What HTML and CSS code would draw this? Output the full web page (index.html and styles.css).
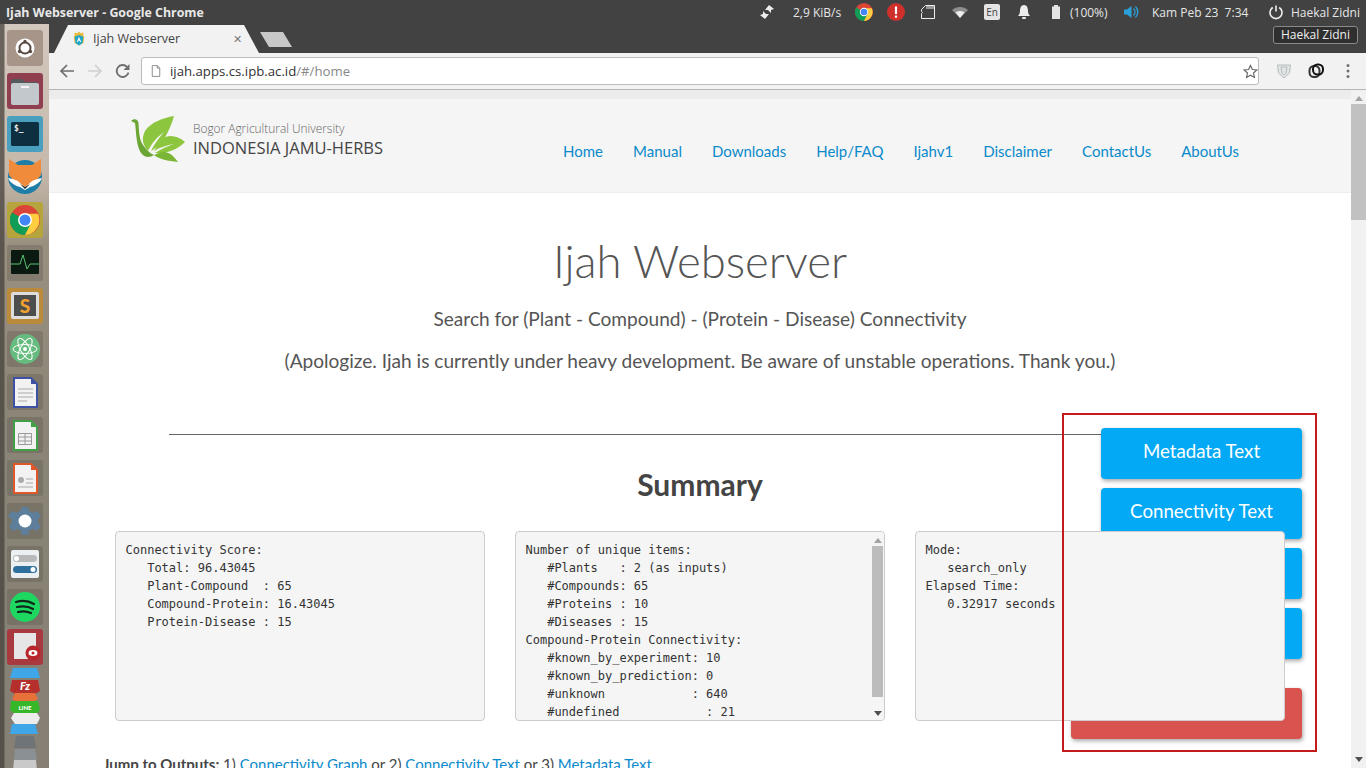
FILE: index.html
```html
<!DOCTYPE html>
<html lang="en">
<head>
  <meta charset="UTF-8" />
  <meta name="viewport" content="width=device-width, initial-scale=1.0" />
  <title>Ijah Webserver</title>
  <link rel="stylesheet" href="styles.css">
</head>
<body>
  <svg class="defs" width="0" height="0">
    <symbol id="chrome" viewBox="0 0 24 24">
      <circle cx="12" cy="12" r="12" fill="#db4437"/>
      <path d="M12 12 L1.6 6 A12 12 0 0 0 12 24 L18 14Z" fill="#0f9d58"/>
      <path d="M12 7 H22.4 A12 12 0 0 1 12 24 L17 14Z" fill="#ffcd40"/>
      <circle cx="12" cy="12" r="5.6" fill="#fff"/>
      <circle cx="12" cy="12" r="4.4" fill="#4285f4"/>
    </symbol>
  </svg>

  <header class="panel">
    <div class="panel-title">Ijah Webserver - Google Chrome</div>
    <div class="tray">
      <svg class="tray-icon" viewBox="0 0 16 16"><path d="M10 1l5 4-3 1v3L9 6 6 6zM6 15l-5-4 3-1V7l3 3 3 0z" fill="#eee"/></svg>
      <span class="tray-text net">2,9 KiB/s</span>
      <svg class="tray-icon tray-icon-big" viewBox="0 0 24 24"><use href="#chrome"/></svg>
      <svg class="tray-icon tray-icon-big" viewBox="0 0 20 20"><circle cx="10" cy="10" r="10" fill="#d0302c"/><rect x="8.8" y="3.5" width="2.4" height="9" rx="1" fill="#fff"/><rect x="8.8" y="14" width="2.4" height="2.4" fill="#fff"/></svg>
      <svg class="tray-icon" viewBox="0 0 16 16"><path d="M5.500 1.500H14.500V14.500H1.500V9.500L2.500 8.500 1.500 7.500V5.500Z" fill="none" stroke="#eee"/><path d="M7 2v3M9 2v3M11 2v3M13 2v3" stroke="#eee"/></svg>
      <svg class="tray-icon" viewBox="0 0 16 16"><path d="M0 6C4 2 12 2 16 6L8 14Z" fill="#8e8e8e"/><path d="M3.500 8.500C6 6.500 10 6.500 12.500 8.500L8 14Z" fill="#eee"/></svg>
      <span class="lang">En</span>
      <svg class="tray-icon" viewBox="0 0 16 16"><path d="M8 1C5 1 4 4 4 7c0 2-1 4-2 5h12c-1-1-2-3-2-5 0-3-1-6-4-6z" fill="#eee"/><rect x="6" y="13" width="4" height="2" rx="1" fill="#eee"/></svg>
      <svg class="tray-icon" viewBox="0 0 16 16"><path d="M6 1h4v1.500h2V15H4V2.500h2z" fill="#e4e4e4"/></svg>
      <span class="tray-text batt">(100%)</span>
      <svg class="tray-icon spk" viewBox="0 0 16 16"><path d="M1 5.500h3L8.500 2v12L4 10.500H1z" fill="#2a9fd8"/><path d="M10.500 4.500c2 2 2 5 0 7M12.500 2.500c3 3 3 8 0 11" fill="none" stroke="#2a9fd8" stroke-width="1.400"/></svg>
      <span class="tray-text date">Kam Peb 23&nbsp; 7:34</span>
      <svg class="tray-icon pwr" viewBox="0 0 16 16"><path d="M8 1.500v6" stroke="#eee" stroke-width="1.600"/><path d="M4.800 3.500a6 6 0 1 0 6.400 0" fill="none" stroke="#eee" stroke-width="1.600"/></svg>
      <span class="tray-text user">Haekal Zidni</span>
    </div>
    <div class="user-tip">Haekal Zidni</div>
  </header>

  <div class="desktop">
    <nav class="launcher">
      <div class="tile tile-ubuntu">
        <svg viewBox="0 0 36 36"><circle cx="18" cy="18" r="9.500" fill="#fff"/><circle cx="18" cy="18" r="5.500" fill="none" stroke="#5a4a44" stroke-width="2"/><circle cx="18" cy="11.500" r="1.700" fill="#5a4a44"/><circle cx="12.500" cy="21.500" r="1.700" fill="#5a4a44"/><circle cx="23.500" cy="21.500" r="1.700" fill="#5a4a44"/></svg>
      </div>
      <div class="tile tile-files">
        <svg viewBox="0 0 36 36"><path d="M4 8a2 2 0 0 1 2-2h9l3 3h12v4H4z" fill="#55595c"/><rect x="4" y="10" width="28" height="22" rx="2" fill="#c3c8cc"/><rect x="14" y="13" width="8" height="2" fill="#f4f4f4"/></svg>
      </div>
      <div class="tile tile-term">
        <svg viewBox="0 0 36 36"><rect x="4" y="6" width="28" height="24" rx="1.500" fill="#0d2f40"/><text x="7" y="15" class="term-text">$_</text></svg>
      </div>
      <div class="tile tile-plain">
        <svg viewBox="0 0 36 36"><circle cx="18" cy="18" r="17" fill="#1f7ea8"/><path d="M2 0l9 6h14l9-6v16l-7 8-9 6-9-6-7-8z" fill="#ef8b3a"/><path d="M1 19c5 1 10 2 13 6l4 3 4-3c3-4 8-5 13-6-2 5-8 8-12 9l-5 3-5-3C9 27 3 24 1 19z" fill="#fff"/><path d="M13 25l5 3 5-3-5 5z" fill="#1c2a33"/></svg>
      </div>
      <div class="tile tile-gold">
        <svg viewBox="0 0 24 24" class="icon-wide"><use href="#chrome"/></svg>
      </div>
      <div class="tile tile-dim">
        <svg viewBox="0 0 36 36"><rect x="4" y="5" width="28" height="24" rx="1" fill="#0b1a10"/><path d="M4 19h9l3-9 4 14 3-5h9" fill="none" stroke="#57c274" stroke-width="1"/></svg>
      </div>
      <div class="tile tile-sublime">
        <svg viewBox="0 0 36 36"><rect x="4" y="4" width="28" height="27" rx="2" fill="#dcdcdc"/><rect x="7" y="7" width="22" height="21" fill="#4d4d4d"/><text x="18" y="25" class="sublime-text">S</text></svg>
      </div>
      <div class="tile tile-dim">
        <svg viewBox="0 0 36 36"><circle cx="18" cy="18" r="15" fill="#66bb7f"/><g fill="none" stroke="#fff" stroke-width="1"><ellipse cx="18" cy="18" rx="12" ry="4.500"/><ellipse cx="18" cy="18" rx="12" ry="4.500" transform="rotate(60 18 18)"/><ellipse cx="18" cy="18" rx="12" ry="4.500" transform="rotate(120 18 18)"/></g><circle cx="18" cy="18" r="2" fill="#fff"/></svg>
      </div>
      <div class="tile tile-dim">
        <svg viewBox="0 0 36 36"><path d="M7 4h17l6 6v23H7z" fill="#f2f2f2" stroke="#3f51a5" stroke-width="2"/><path d="M24 4l6 6h-6z" fill="#3f51a5"/><path d="M11 15h15M11 19h15M11 23h15M11 27h9" stroke="#aaa"/></svg>
      </div>
      <div class="tile tile-dim">
        <svg viewBox="0 0 36 36"><path d="M7 4h17l6 6v23H7z" fill="#f2f2f2" stroke="#43a047" stroke-width="2"/><path d="M24 4l6 6h-6z" fill="#43a047"/><path d="M11.500 16.500h13v11h-13zM11.500 20h13M11.500 24h13M18 16.500v11" fill="none" stroke="#999"/></svg>
      </div>
      <div class="tile tile-dim">
        <svg viewBox="0 0 36 36"><path d="M7 4h17l6 6v23H7z" fill="#f2f2f2" stroke="#e0572a" stroke-width="2"/><path d="M24 4l6 6h-6z" fill="#e0572a"/><circle cx="14" cy="20" r="3" fill="#aaa"/><path d="M19 19h7M19 23h7M11 27h15" stroke="#aaa"/></svg>
      </div>
      <div class="tile tile-dim">
        <svg viewBox="0 0 36 36"><path d="M15 4h6l1 4 4 2 4-2 4 5-3 3v4l3 3-4 5-4-2-4 2-1 4h-6l-1-4-4-2-4 2-4-5 3-3v-4L1 13l4-5 4 2 4-2z" fill="#5d7f9c"/><circle cx="18" cy="18" r="6.500" fill="#fff"/></svg>
      </div>
      <div class="tile tile-dim">
        <svg viewBox="0 0 36 36"><rect x="4" y="4" width="28" height="28" rx="2" fill="#eceff1"/><rect x="6" y="9" width="24" height="7" rx="3.500" fill="#b9b9b9"/><circle cx="9.500" cy="12.500" r="2.500" fill="#fff"/><rect x="6" y="20" width="24" height="7" rx="3.500" fill="#2f6f9e"/><circle cx="26" cy="23.500" r="2.500" fill="#fff"/></svg>
      </div>
      <div class="tile tile-dim">
        <svg viewBox="0 0 36 36"><circle cx="18" cy="18" r="15" fill="#1ed760"/><path d="M9 13c6-2 13-1 18 2M10 18c5-1 11-1 16 2M11 23c4-1 9-1 13 1" fill="none" stroke="#10261a" stroke-width="2.200" stroke-linecap="round"/></svg>
      </div>
      <div class="tile tile-eye">
        <svg viewBox="0 0 36 36"><rect x="7" y="4" width="22" height="26" fill="#e6e6e6"/><circle cx="26" cy="24" r="7.500" fill="#b8262c"/><ellipse cx="26" cy="24" rx="4.500" ry="3" fill="#fff"/><circle cx="26" cy="24" r="1.500" fill="#b8262c"/></svg>
      </div>
      <svg class="stack" viewBox="0 0 36 102">
        <path d="M6 0H30L33 10H3z" fill="#3fa6e8"/>
        <path d="M5 12H31L33 23 28 26H8L3 23z" fill="#b5302c"/>
        <text x="18" y="22" class="stack-text">Fz</text>
        <path d="M8 25H28L31 31 24 35H12L5 31z" fill="#e8713a"/>
        <path d="M4 33H31L33 42 30 45H7L3 42z" fill="#38b62a"/>
        <text x="18" y="42" class="line-text">LINE</text>
        <path d="M7 45H30L33 50 30 56H8L4 50z" fill="#ececec"/>
        <path d="M5 56H28L31 66H3z" fill="#3fa6e8"/>
        <path d="M9 68H27L29 80H7z" fill="#6f7478"/>
        <path d="M8 81H28L30 92H7z" fill="#8b9094"/>
        <path d="M7 92H29L30 102H6z" fill="#c9c9c9"/>
      </svg>
    </nav>

    <div class="browser">
      <div class="tabstrip">
        <div class="tab">
          <svg class="tab-fav" viewBox="0 0 16 16"><path d="M8 0l2 2 3-1v4l1 1-1 7-5 3-5-3-1-7 1-1V1l3 1z" fill="#e8b93a"/><path d="M8 4l5 2-1 7-4 3-4-3-1-7z" fill="#22a7c9"/><path d="M8 6l2.500 6H9.300L8.800 10.700H7.200L6.700 12H5.500z" fill="#fff"/></svg>
          <span class="tab-title">Ijah Webserver</span>
          <span class="tab-close">&#x2715;</span>
        </div>
        <div class="new-tab"></div>
      </div>

      <div class="toolbar">
        <svg class="nav-icon" viewBox="0 0 16 16"><path d="M15 8H2.500M8 2L2 8l6 6" fill="none" stroke="#6e6e6e" stroke-width="1.700"/></svg>
        <svg class="nav-icon" viewBox="0 0 16 16"><path d="M1 8h12.500M8 2l6 6-6 6" fill="none" stroke="#d0d0d0" stroke-width="1.700"/></svg>
        <svg class="nav-icon" viewBox="0 0 16 16"><path d="M13.500 9.500A6 6 0 1 1 12 3.800" fill="none" stroke="#6e6e6e" stroke-width="1.800"/><path d="M14.500 1v6h-6z" fill="#6e6e6e"/></svg>
        <div class="omnibox">
          <svg class="page-icon" viewBox="0 0 12 14"><path d="M1.500.5h6l3 3v10h-9zM7.500.5v3h3" fill="none" stroke="#7a7a7a"/></svg>
          <span class="url">ijah.apps.cs.ipb.ac.id<span class="url-path">/#/home</span></span>
          <svg class="star" viewBox="0 0 16 16"><path d="M8 1.500l2 4.400 4.700.5-3.500 3.200 1 4.700L8 11.900l-4.200 2.400 1-4.700L1.300 6.400 6 5.900z" fill="none" stroke="#666" stroke-width="1.200"/></svg>
        </div>
        <svg class="ext-icon" viewBox="0 0 16 16"><path d="M1.500 2h13l-1 8L8 15l-5.500-5z" fill="#e2e6e6" stroke="#b6bcbc"/><path d="M5 4h6l-1 6-2 2-2-2z" fill="none" stroke="#b6bcbc"/></svg>
        <svg class="ext-icon" viewBox="0 0 16 16"><rect x="1.500" y="3" width="10" height="11" rx="4.500" fill="none" stroke="#333" stroke-width="2"/><rect x="5" y="1.500" width="10" height="10" rx="4.500" fill="none" stroke="#111" stroke-width="2"/></svg>
        <svg class="menu-icon" viewBox="0 0 4 16"><circle cx="2" cy="2.500" r="1.500" fill="#707070"/><circle cx="2" cy="8" r="1.500" fill="#707070"/><circle cx="2" cy="13.500" r="1.500" fill="#707070"/></svg>
      </div>

      <div class="viewport">
        <main class="page">
          <div class="page-shade"></div>
          <div class="navbar">
            <div class="brand">
              <svg class="brand-mark" viewBox="0 0 56 48">
                <path d="M1 6C4 3 8 4 8.500 8 9 16 9 24 13 30c3 4 6 8 11 10-6 4-12 2-15-6C6 26 6 14 5 8z" fill="#6ba534"/>
                <path d="M44 1C33 3 21 7 15 16c-4 8-2 14 3 20 4-8 9-14 16-19-5 6-10 12-13 19C32 30 39 18 44 1z" fill="#8cc63f"/>
                <path d="M55 27C47 20 37 19 31 25l-7 11c7-4 13-6 20-7-6 2-13 5-19 9 11 1 22-3 30-11z" fill="#8cc63f"/>
                <path d="M48 47C42 38 36 35 29 38l-5 2c5 4 14 6 24 7z" fill="#7ab535"/>
              </svg>
              <div class="brand-text">
                <div class="brand-top">Bogor Agricultural University</div>
                <div class="brand-name">INDONESIA JAMU-HERBS</div>
              </div>
            </div>
            <div class="nav-links">
              <a>Home</a>
              <a>Manual</a>
              <a>Downloads</a>
              <a>Help/FAQ</a>
              <a>Ijahv1</a>
              <a>Disclaimer</a>
              <a>ContactUs</a>
              <a>AboutUs</a>
            </div>
          </div>

          <div class="container">
            <h1>Ijah Webserver</h1>
            <p class="lead">Search for (Plant - Compound) - (Protein - Disease) Connectivity</p>
            <p class="lead">(Apologize. Ijah is currently under heavy development. Be aware of unstable operations. Thank you.)</p>
            <hr>
            <h2>Summary</h2>
            <div class="summary">
              <pre class="box">Connectivity Score:
   Total: 96.43045
   Plant-Compound  : 65
   Compound-Protein: 16.43045
   Protein-Disease : 15</pre>
              <div class="box box-scroll">
                <pre>Number of unique items:
   #Plants   : 2 (as inputs)
   #Compounds: 65
   #Proteins : 10
   #Diseases : 15
Compound-Protein Connectivity:
   #known_by_experiment: 10
   #known_by_prediction: 0
   #unknown            : 640
   #undefined            : 21</pre>
                <div class="mini-scroll">
                  <span class="arrow-up"></span>
                  <span class="mini-thumb"></span>
                  <span class="arrow-down"></span>
                </div>
              </div>
              <pre class="box box-top">Mode:
   search_only
Elapsed Time:
   0.32917 seconds</pre>
            </div>
            <p class="jump"><b>Jump to Outputs:</b> 1) <a>Connectivity Graph</a> or 2) <a>Connectivity Text</a> or 3) <a>Metadata Text</a></p>
          </div>

          <div class="float-actions">
            <div class="fab">Metadata Text</div>
            <div class="fab">Connectivity Text</div>
            <div class="fab"></div>
            <div class="fab"></div>
            <div class="fab fab-red"></div>
          </div>
          <div class="red-box"></div>
        </main>

        <div class="scrollbar">
          <span class="arrow-up"></span>
          <span class="thumb"></span>
          <span class="arrow-down"></span>
        </div>
      </div>
    </div>
  </div>
</body>
</html>
```

FILE: styles.css
```css
html, body {
  height: 100%;
}

body {
  margin: 0;
  display: flex;
  flex-direction: column;
  height: 100vh;
  overflow: hidden;
  font-family: Lato, "Open Sans", sans-serif;
  color: #444;
  background-color: #fff;
}

.defs {
  position: absolute;
}

/* system panel */
.panel {
  position: relative;
  z-index: 5;
  flex: none;
  display: flex;
  justify-content: space-between;
  align-items: center;
  height: 24px;
  padding: 0 5px 0 6px;
  background-color: #424242;
  color: #e6e6e6;
  font-family: "Open Sans", "Noto Sans", sans-serif;
  font-size: 12px;
}

.panel-title {
  font-weight: 700;
  font-size: 12.4px;
  color: #e8e8e8;
}

.tray {
  display: flex;
  align-items: center;
  gap: 16px;
}

.tray-icon {
  width: 16px;
  height: 16px;
  flex: none;
}

.tray-icon-big {
  width: 18px;
  height: 18px;
  margin: 0 -1px;
}

.tray-text {
  white-space: nowrap;
}

.net {
  width: 50px;
  margin: 0 -3px 0 2px;
}

.batt {
  width: 40px;
  margin-left: -10px;
  margin-right: -3px;
}

.spk {
  margin-right: -3px;
}

.date {
  width: 100px;
}

.user {
  width: 70px;
  margin-left: -9px;
}

.lang {
  width: 16px;
  height: 16px;
  line-height: 16px;
  border-radius: 2px;
  background-color: #e4e4e4;
  color: #444;
  font-size: 10px;
  text-align: center;
}

.user-tip {
  position: absolute;
  top: 26px;
  right: 8px;
  height: 16px;
  padding: 0 7px;
  line-height: 16px;
  border: 1px solid #8a8a8a;
  border-radius: 3px;
  background-color: #2f2f2f;
  color: #eee;
}

.desktop {
  flex: 1;
  display: flex;
  min-height: 0;
}

/* launcher */
.launcher {
  flex: none;
  display: flex;
  flex-direction: column;
  align-items: center;
  gap: 7px;
  width: 49px;
  padding: 6px 0 0 0;
  box-sizing: border-box;
  overflow: hidden;
  background:
    linear-gradient(90deg, rgba(70, 66, 60, 0.75) 0, rgba(70, 66, 60, 0.75) 4px, transparent 5px),
    linear-gradient(180deg, #d3c8be 0, #c5b8aa 150px, #9a9080 220px, #8b8577 400px, #857f74 100%);
}

.tile {
  flex: none;
  width: 36px;
  height: 36px;
  border-radius: 3px;
}

.tile svg {
  display: block;
  width: 36px;
  height: 36px;
}

.tile .icon-wide {
  width: 30px;
  height: 30px;
  margin: 3px;
}

.tile-ubuntu {
  background-color: #a8958a;
}

.tile-files {
  background-color: #8f3f50;
}

.tile-term {
  background-color: #4a9fbe;
}

.tile-gold {
  background-color: #b5a53c;
}

.tile-dim {
  background-color: rgba(70, 66, 60, 0.25);
}

.tile-sublime {
  background-color: #bb8a3a;
}

.tile-eye {
  background-color: #a8393e;
  margin-top: -3px;
}

.term-text {
  fill: #eee;
  font-family: "DejaVu Sans Mono", monospace;
  font-size: 8px;
  font-weight: 700;
}

.sublime-text {
  fill: #f0a030;
  font-family: Lato, sans-serif;
  font-size: 19px;
  font-weight: 900;
  text-anchor: middle;
}

.stack {
  flex: none;
  width: 36px;
  height: 102px;
  margin-top: -4px;
}

.stack-text {
  fill: #fff;
  font-family: Lato, sans-serif;
  font-size: 11px;
  font-weight: 900;
  font-style: italic;
  text-anchor: middle;
}

.line-text {
  fill: #fff;
  font-family: Lato, sans-serif;
  font-size: 6px;
  font-weight: 900;
  text-anchor: middle;
}

/* chrome window */
.browser {
  flex: 1;
  display: flex;
  flex-direction: column;
  min-width: 0;
}

.tabstrip {
  flex: none;
  display: flex;
  align-items: flex-end;
  height: 29px;
  padding-left: 5px;
  background-color: #424242;
}

.tab {
  display: flex;
  align-items: center;
  width: 205px;
  height: 28px;
  padding: 0 17px 2px 18px;
  box-sizing: border-box;
  background-color: #f2f2f2;
  clip-path: polygon(0 100%, 14px 0, 190px 0, 100% 100%);
  font-family: "Open Sans", "Noto Sans", sans-serif;
  font-size: 12.500px;
  color: #444;
}

.tab-fav {
  flex: none;
  width: 14px;
  height: 15px;
  margin-right: 7px;
}

.tab-title {
  flex: 1;
}

.tab-close {
  font-size: 11px;
  color: #777;
}

.new-tab {
  width: 32px;
  height: 15px;
  margin: 0 0 6px 1px;
  background-color: #c8c8c8;
  clip-path: polygon(0 0, 23px 0, 100% 100%, 9px 100%);
}

.toolbar {
  flex: none;
  display: flex;
  align-items: center;
  height: 36px;
  padding: 0 16px 0 10px;
  border-bottom: 1px solid #b5b5b5;
  background-color: #f2f2f2;
}

.nav-icon {
  flex: none;
  width: 16px;
  height: 16px;
  margin-right: 12px;
}

.omnibox {
  flex: 1;
  display: flex;
  align-items: center;
  height: 26px;
  margin: 0 17px 0 -2px;
  padding: 0 0 0 9px;
  border: 1px solid #bbb;
  border-radius: 3px;
  background-color: #fff;
  font-family: "Open Sans", "Noto Sans", sans-serif;
  font-size: 13.200px;
  color: #333;
}

.page-icon {
  flex: none;
  width: 10px;
  height: 12px;
  margin-right: 9px;
}

.url {
  flex: 1;
}

.url-path {
  color: #888;
}

.star {
  width: 15px;
  height: 15px;
}

.ext-icon {
  flex: none;
  width: 16px;
  height: 16px;
  margin-right: 16px;
}

.menu-icon {
  flex: none;
  width: 4px;
  height: 16px;
  margin-left: 6px;
}

.viewport {
  flex: 1;
  display: flex;
  min-height: 0;
}

/* page */
.page {
  position: relative;
  flex: 1;
  min-width: 0;
  overflow: hidden;
}

.page-shade {
  height: 9px;
  background-color: #ececec;
}

.navbar {
  display: flex;
  justify-content: space-between;
  height: 94px;
  padding: 0 112px 0 82px;
  box-sizing: border-box;
  border-bottom: 1px solid #eee;
  background-color: #f5f5f5;
}

.brand {
  display: flex;
  align-items: flex-start;
  gap: 7px;
  padding-top: 16px;
}

.brand-mark {
  flex: none;
  width: 56px;
  height: 48px;
  margin-left: -1px;
}

.brand-text {
  padding-top: 5px;
  font-family: "Open Sans", sans-serif;
  color: #444;
}

.brand-top {
  font-size: 11.900px;
  font-weight: 300;
  line-height: 17px;
  color: #666;
}

.brand-name {
  font-size: 16.500px;
  line-height: 22px;
  white-space: nowrap;
}

.nav-links {
  display: flex;
  gap: 30px;
  padding-top: 41px;
  font-size: 15px;
  line-height: 22px;
}

a {
  color: #0a8acb;
}

.container {
  width: 1170px;
  margin: 0 auto;
  text-align: center;
}

h1 {
  margin: 39px 0 15px;
  font-size: 45.500px;
  font-weight: 300;
  line-height: 58px;
  color: #555;
}

.lead {
  margin: 14px 0 0;
  font-size: 19.100px;
  line-height: 28px;
  color: #555;
}

hr {
  width: 1062px;
  height: 1px;
  margin: 59px auto 0;
  border: 0;
  background-color: #666;
}

h2 {
  margin: 29px 0 0;
  font-size: 30px;
  font-weight: 700;
  line-height: 40px;
  color: #444;
}

.summary {
  display: grid;
  grid-template-columns: repeat(3, 370px);
  gap: 30px;
  margin-top: 27px;
  text-align: left;
}

.box, .box pre {
  margin: 0;
  font-family: "DejaVu Sans Mono", "Liberation Mono", monospace;
  font-size: 12px;
  line-height: 18px;
  color: #333;
}

.box {
  height: 190px;
  padding: 8.500px 9.500px 9.500px;
  box-sizing: border-box;
  overflow: hidden;
  border: 1px solid #ccc;
  border-radius: 4px;
  background-color: #f5f5f5;
}

.box-scroll {
  display: flex;
  justify-content: space-between;
  padding-right: 0;
  padding-bottom: 0;
}

.box-top {
  position: relative;
  z-index: 2;
}

.mini-scroll {
  display: flex;
  flex-direction: column;
  align-items: center;
  justify-content: space-between;
  width: 13px;
  height: 188px;
  margin-top: -8.500px;
  padding: 6px 0 4px;
  box-sizing: border-box;
  background-color: #f5f5f5;
}

.mini-thumb {
  flex: 1;
  width: 11px;
  margin: 3px 0 14px;
  background-color: #bcbcbc;
}

.arrow-up {
  width: 0;
  height: 0;
  border: 4px solid transparent;
  border-top: 0;
  border-bottom: 5px solid #a3a3a3;
}

.arrow-down {
  width: 0;
  height: 0;
  border: 4px solid transparent;
  border-bottom: 0;
  border-top: 5px solid #505050;
}

.jump {
  margin: 32px 0 0 -12px;
  font-size: 15px;
  line-height: 22px;
  text-align: left;
}

/* floating buttons */
.float-actions {
  position: absolute;
  top: 338px;
  right: 49px;
  z-index: 1;
  display: flex;
  flex-direction: column;
  align-items: flex-end;
  gap: 9px;
}

.fab {
  width: 201px;
  height: 51px;
  line-height: 46px;
  border-radius: 4px;
  background-color: #03a9f4;
  box-shadow: 1px 2px 4px rgba(0, 0, 0, 0.35);
  color: #fff;
  font-size: 18.700px;
  text-align: center;
}

.fab-red {
  width: 231px;
  margin-top: 20px;
  background-color: #d9534f;
}

.red-box {
  position: absolute;
  top: 323px;
  left: 1013px;
  z-index: 3;
  width: 255px;
  height: 339px;
  box-sizing: border-box;
  border: 2px solid #c41a1a;
}

.scrollbar {
  flex: none;
  display: flex;
  flex-direction: column;
  align-items: center;
  width: 15px;
  padding: 6px 0 6px;
  box-sizing: border-box;
  background-color: #f1f1f1;
}

.thumb {
  width: 15px;
  height: 116px;
  margin-top: 3px;
  background-color: #c1c1c1;
}

.scrollbar .arrow-down {
  margin-top: auto;
}
```
